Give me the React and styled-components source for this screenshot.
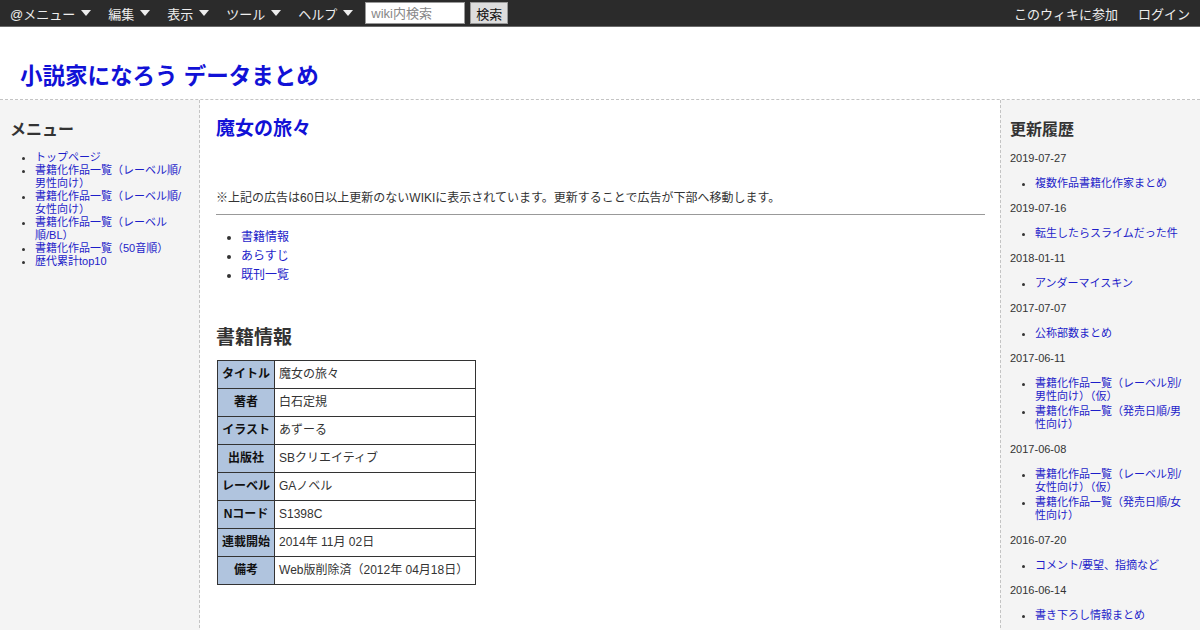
import React from 'react'
import styled, { createGlobalStyle } from 'styled-components'

const GlobalStyle = createGlobalStyle`
    body {
        margin: 0;
        font-family: "Liberation Sans", "Noto Sans CJK JP", sans-serif;
        color: #333;
        background: #fff;
    }
    a { color: #1d1dc9; text-decoration: none; }
`;

const TopBar = styled.div`
    height: 26px;
    background: #2b2b2b;
    border-bottom: 1px solid #6a6a6a;
    display: flex;
    align-items: center;
    justify-content: space-between;
    padding: 0 10px;
    font-size: 13px;
    color: #eee;
`;

const BarGroup = styled.div`
    display: flex;
    align-items: center;
    gap: ${p => p.gap || 17}px;
`;

const BarItem = styled.div`
    display: flex;
    align-items: center;
    white-space: nowrap;
`;

const Caret = styled.span`
    display: inline-block;
    margin-left: 6px;
    width: 0;
    height: 0;
    border-left: 5px solid transparent;
    border-right: 5px solid transparent;
    border-top: 6px solid #eee;
`;

const SearchForm = styled.form`
    display: flex;
    align-items: center;
    gap: 5px;
    margin-left: -5px;
`;

const SearchInput = styled.input`
    width: 100px;
    height: 22px;
    box-sizing: border-box;
    border: 1px solid #999;
    padding: 0 5px;
    font-size: 13px;
    font-family: inherit;
    &::placeholder { color: #888; }
`;

const SearchButton = styled.button`
    height: 22px;
    padding: 0 5px;
    border: 1px solid #999;
    background: #ddd;
    color: #111;
    font-size: 13px;
    font-family: inherit;
`;

const Header = styled.div`
    height: 73px;
    border-bottom: 1px dashed #c4c4c4;
    display: flex;
    align-items: flex-end;
    padding: 0 20px 9px;
    box-sizing: border-box;
`;

const SiteTitle = styled.a`
    font-size: 22.5px;
    font-weight: bold;
    color: #1111d6;
`;

const Columns = styled.div`
    display: grid;
    grid-template-columns: 200px 1fr 200px;
    min-height: 530px;
`;

const Side = styled.div`
    background: #f4f4f4;
    padding: ${p => p.right ? '20px 10px 10px 9px' : '20px 10px 10px'};
    box-sizing: border-box;
    ${p => p.right ? 'border-left: 1px dashed #c4c4c4;' : 'border-right: 1px dashed #c4c4c4;'}
`;

const SideTitle = styled.h3`
    margin: 0 0 11px;
    font-size: 16px;
    line-height: 20px;
    color: #333;
`;

const SideList = styled.ul`
    margin: ${p => p.tight ? '0' : '11px 0'};
    padding-left: 25px;
    font-size: 11px;
    line-height: 13px;
    li + li { margin-top: ${p => p.tight ? 0 : 2}px; }
`;

const DateLine = styled.div`
    font-size: 11px;
    line-height: 15px;
    color: #333;
`;

const Main = styled.div`
    padding: 16px 15px 20px 16px;
`;

const PageTitle = styled.h2`
    margin: 0;
    font-size: 19px;
    line-height: 26px;
    color: #1111d6;
`;

const Note = styled.div`
    margin-top: 47px;
    font-size: 12px;
    line-height: 18px;
    padding-bottom: 7px;
    border-bottom: 1px solid #999;
`;

const Toc = styled.ul`
    margin: 13px 0 0;
    padding-left: 25px;
    font-size: 12px;
    line-height: 19px;
`;

const SectionTitle = styled.h3`
    margin: 40px 0 9px;
    font-size: 19px;
    line-height: 26px;
    color: #333;
`;

const InfoTable = styled.table`
    border-collapse: collapse;
    font-size: 12px;
    margin-left: 1px;
    th, td {
        border: 1px solid #333;
        padding: 4px 4px;
        line-height: 19px;
        white-space: nowrap;
    }
    th {
        background: #b0c4de;
        color: #111;
        text-align: center;
    }
    td { width: 192px; }
`;

const menu = [
    'トップページ',
    '書籍化作品一覧（レーベル順/男性向け）',
    '書籍化作品一覧（レーベル順/女性向け）',
    '書籍化作品一覧（レーベル順/BL）',
    '書籍化作品一覧（50音順）',
    '歴代累計top10',
];

const history = [
    ['2019-07-27', ['複数作品書籍化作家まとめ']],
    ['2019-07-16', ['転生したらスライムだった件']],
    ['2018-01-11', ['アンダーマイスキン']],
    ['2017-07-07', ['公称部数まとめ']],
    ['2017-06-11', ['書籍化作品一覧（レーベル別/男性向け）（仮）', '書籍化作品一覧（発売日順/男性向け）']],
    ['2017-06-08', ['書籍化作品一覧（レーベル別/女性向け）（仮）', '書籍化作品一覧（発売日順/女性向け）']],
    ['2016-07-20', ['コメント/要望、指摘など']],
    ['2016-06-14', ['書き下ろし情報まとめ']],
];

const info = [
    ['タイトル', '魔女の旅々'],
    ['著者', '白石定規'],
    ['イラスト', 'あずーる'],
    ['出版社', 'SBクリエイティブ'],
    ['レーベル', 'GAノベル'],
    ['Nコード', 'S1398C'],
    ['連載開始', '2014年 11月 02日'],
    ['備考', 'Web版削除済（2012年 04月18日）'],
];

export default function App(){
    return (
        <>
            <GlobalStyle />
            <TopBar>
                <BarGroup>
                    {['@メニュー', '編集', '表示', 'ツール', 'ヘルプ'].map(label => (
                        <BarItem key={label}>{label}<Caret /></BarItem>
                    ))}
                    <SearchForm onSubmit={e => e.preventDefault()}>
                        <SearchInput placeholder="wiki内検索" />
                        <SearchButton>検索</SearchButton>
                    </SearchForm>
                </BarGroup>
                <BarGroup gap={20}>
                    <BarItem>このウィキに参加</BarItem>
                    <BarItem>ログイン</BarItem>
                </BarGroup>
            </TopBar>
            <Header>
                <SiteTitle href="#">小説家になろう データまとめ</SiteTitle>
            </Header>
            <Columns>
                <Side>
                    <SideTitle>メニュー</SideTitle>
                    <SideList tight>
                        {menu.map(m => <li key={m}><a href="#">{m}</a></li>)}
                    </SideList>
                </Side>
                <Main>
                    <PageTitle>魔女の旅々</PageTitle>
                    <Note>※上記の広告は60日以上更新のないWIKIに表示されています。更新することで広告が下部へ移動します。</Note>
                    <Toc>
                        <li><a href="#">書籍情報</a></li>
                        <li><a href="#">あらすじ</a></li>
                        <li><a href="#">既刊一覧</a></li>
                    </Toc>
                    <SectionTitle>書籍情報</SectionTitle>
                    <InfoTable>
                        <tbody>
                            {info.map(([k, v]) => (
                                <tr key={k}><th>{k}</th><td>{v}</td></tr>
                            ))}
                        </tbody>
                    </InfoTable>
                </Main>
                <Side right>
                    <SideTitle>更新履歴</SideTitle>
                    {history.map(([date, items]) => (
                        <div key={date}>
                            <DateLine>{date}</DateLine>
                            <SideList>
                                {items.map(i => <li key={i}><a href="#">{i}</a></li>)}
                            </SideList>
                        </div>
                    ))}
                </Side>
            </Columns>
        </>
    )
}
